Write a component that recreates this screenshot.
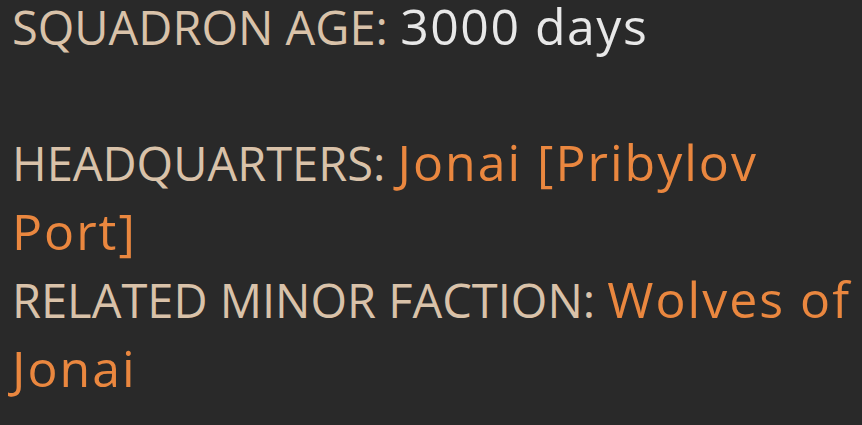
export default function App() {
  const label = "text-[#d9c2a9]"
  const orange = "text-[50px] tracking-[2px] text-[#ea873f]"

  return (
    <div className="w-[862px] h-[425px] bg-[#292929] overflow-hidden">
      <div
        className="pl-[12px] text-[47px] font-medium leading-[67.5px]"
        style={{ fontFamily: '"Open Sans", "Noto Sans", sans-serif' }}
      >
        <p className="leading-[53.5px]">
          <span className={label}>SQUADRON AGE: </span>
          <span className="text-[50px] tracking-[1.5px] text-[#e8e8e8]">3000 days</span>
        </p>
        <p className="mt-[74.5px]">
          <span className={label}>HEADQUARTERS: </span>
          <span className={orange}>Jonai [Pribylov Port]</span>
        </p>
        <p>
          <span className={label}>RELATED MINOR FACTION: </span>
          <span className={orange}>Wolves of Jonai</span>
        </p>
      </div>
    </div>
  )
}
